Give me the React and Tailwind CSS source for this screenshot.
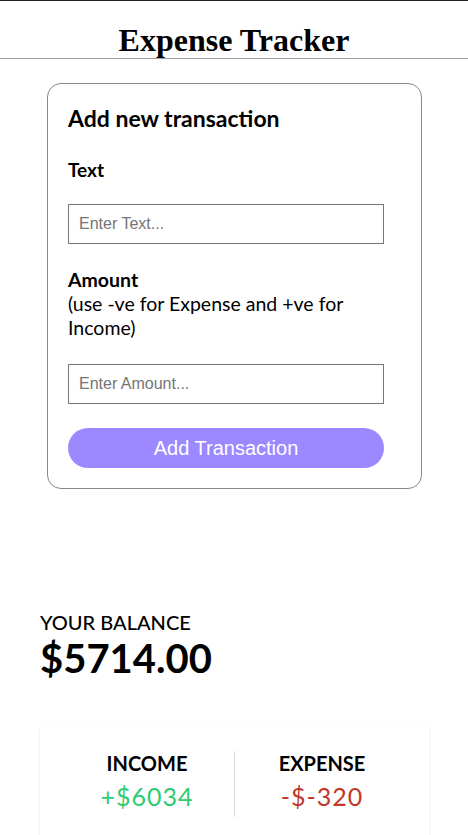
import React, { useState } from "react";

export default function App() {
  const [text, setText] = useState("");
  const [amount, setAmount] = useState("");

  return (
    <div className="min-h-[835px] bg-white font-['Lato','Liberation_Sans',sans-serif] text-black">
      {/* Header */}
      <header className="border-t border-t-[#222] border-b border-b-[#a0a0a0] pt-[21px]">
        <h1 className="text-center font-['Liberation_Serif',serif] text-[32px] leading-[36px] font-bold">
          Expense Tracker
        </h1>
      </header>

      {/* Add transaction form */}
      <div className="mt-[24px] ml-[47px] w-[375px] rounded-[14px] border border-[#888] px-[20px] pt-[18px] pb-[20px]">
        <h3 className="text-[23px] leading-[32px] font-bold">Add new transaction</h3>
        <form onSubmit={(e) => e.preventDefault()}>
          <label className="mt-[24px] block text-[19px] leading-[24px] font-bold">Text</label>
          <input
            type="text"
            value={text}
            onChange={(e) => setText(e.target.value)}
            placeholder="Enter Text..."
            className="mt-[22px] block h-[40px] w-[316px] border border-[#777] px-[10px] font-['Liberation_Sans',sans-serif] text-[16px] placeholder:text-[#757575] outline-none"
          />
          <label className="mt-[24px] block w-[316px] text-[19.5px] leading-[24px]">
            <span className="font-bold">Amount</span>
            <br />
            (use -ve for Expense and +ve for Income)
          </label>
          <input
            type="number"
            value={amount}
            onChange={(e) => setAmount(e.target.value)}
            placeholder="Enter Amount..."
            className="mt-[24px] block h-[40px] w-[316px] border border-[#777] px-[10px] font-['Liberation_Sans',sans-serif] text-[16px] placeholder:text-[#757575] outline-none"
          />
          <button
            type="submit"
            className="mt-[24px] block h-[40px] w-[316px] rounded-full bg-[#9c88ff] font-['Liberation_Sans',sans-serif] text-[20px] text-white"
          >
            Add Transaction
          </button>
        </form>
      </div>

      {/* Balance */}
      <div className="mt-[121px] px-[40px]">
        <h4 className="text-[20px] leading-[24px] font-medium uppercase">Your Balance</h4>
        <h1 className="text-[40px] leading-[48px] font-bold">$5714.00</h1>
      </div>

      {/* Income / Expense */}
      <div className="mt-[44px] ml-[40px] flex w-[389px] bg-white px-[20px] pt-[25px] pb-[20px] shadow-[0_1px_3px_rgba(0,0,0,0.1)]">
        <div className="flex-1 border-r border-[#dedede] text-center">
          <h4 className="text-[20px] leading-[24px] font-bold uppercase">Income</h4>
          <p className="my-[6px] text-[25px] leading-[30px] tracking-[1px] text-[#2ecc71]">+$6034</p>
        </div>
        <div className="flex-1 text-center">
          <h4 className="text-[20px] leading-[24px] font-bold uppercase">Expense</h4>
          <p className="my-[6px] text-[25px] leading-[30px] tracking-[1px] text-[#c0392b]">-$-320</p>
        </div>
      </div>
    </div>
  );
}
